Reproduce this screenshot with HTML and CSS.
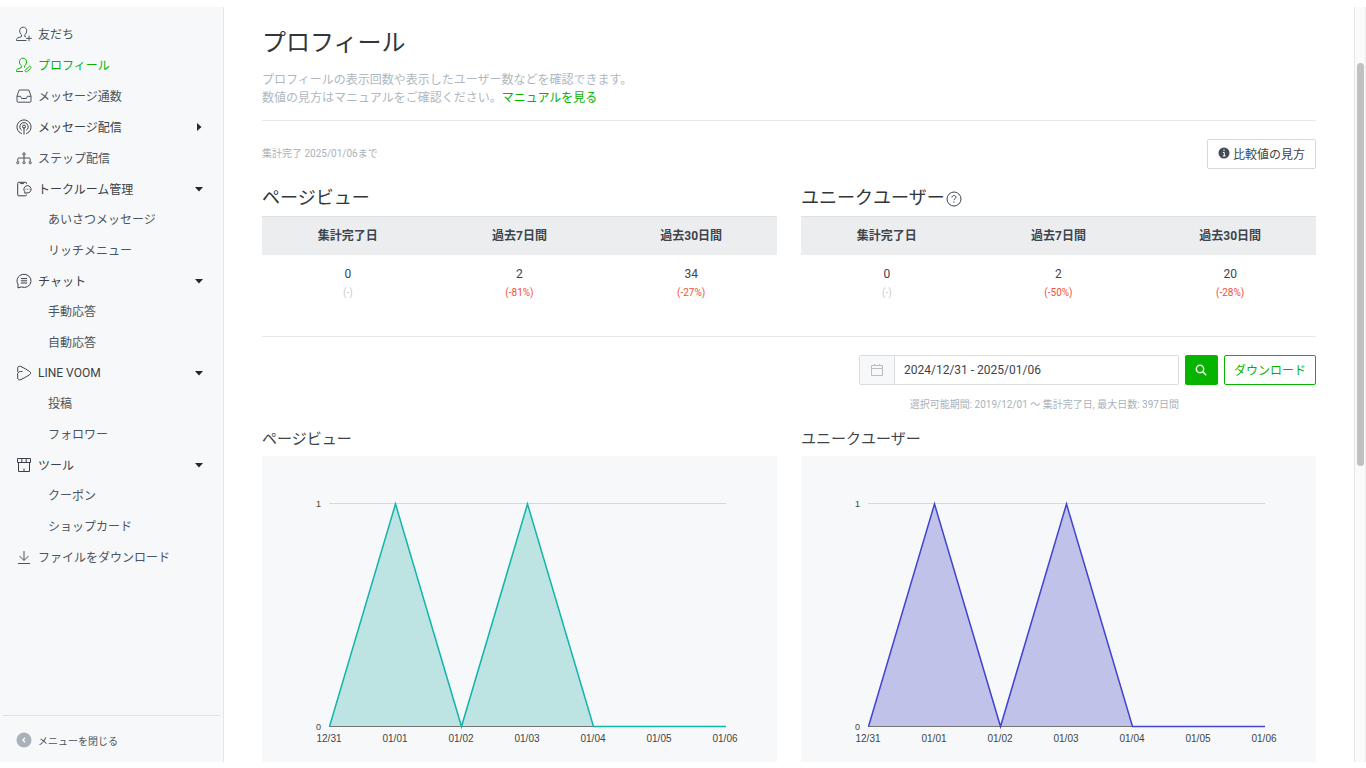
FILE: index.html
```html
<!DOCTYPE html>
<html lang="ja">
<head>
<meta charset="utf-8">
<title>プロフィール</title>
<link rel="stylesheet" href="styles.css">
</head>
<body>
<div class="app">
  <aside class="sidebar">
    <nav class="nav">
      <ul class="nav-list">
        <li><a class="nav-link" href="#"><svg class="icon" viewBox="0 0 16 16"><path d="M10 11l-1.200-.5V8.800C10 8 10.700 6.500 10.700 4.800 10.700 2.600 9.200 1.200 7.200 1.200S3.700 2.600 3.700 4.800c0 1.700.7 3.200 1.900 4v1.700L1.600 12c-.7.300-1.100.8-1.100 1.500v1h10M13 9.600v5.600M10.200 12.400h5.600"/></svg>友だち</a></li>
        <li><a class="nav-link active" href="#"><svg class="icon" viewBox="0 0 16 16"><path d="M9 10.500l-.4-.2V8.700C9.800 8 10.500 6.500 10.500 4.800 10.500 2.600 9 1.200 7 1.200S3.500 2.600 3.500 4.800c0 1.700.7 3.200 1.900 4v1.700L1.600 12c-.7.300-1.100.8-1.100 1.500v1h6.500M9.300 13.200l3.600-3.600c.5-.5 1.200-.5 1.700 0s.5 1.200 0 1.700l-3.400 3.200c-.5.500-1.300.5-1.800 0s-.5-.9-.1-1.300z"/></svg>プロフィール</a></li>
        <li><a class="nav-link" href="#"><svg class="icon" viewBox="0 0 16 16"><path d="M3.200 2h9.600l2.200 6v5.200a1 1 0 0 1-1 1H2a1 1 0 0 1-1-1V8zM1 8.300h3.600l1 2.200h4.800l1-2.200H15"/></svg>メッセージ通数</a></li>
        <li><a class="nav-link strong" href="#"><svg class="icon" viewBox="0 0 16 16"><path d="M5.800 14.600A7 7 0 1 1 10.200 14.600M5.800 11.400a4.200 4.200 0 1 1 4.400 0M8 8v7.500"/><circle cx="8" cy="7.600" r="1.500"/></svg>メッセージ配信<svg class="caret right" viewBox="0 0 8 8"><path d="M2 0l4.500 4L2 8z"/></svg></a></li>
        <li><a class="nav-link" href="#"><svg class="icon" viewBox="0 0 16 16"><path d="M8 5v6.500M1.800 11.700V9a1 1 0 0 1 1-1h10.400a1 1 0 0 1 1 1v2.700"/><circle cx="8" cy="4" r="1.200"/><circle cx="1.800" cy="12.700" r="1.100"/><circle cx="8" cy="12.700" r="1.100"/><circle cx="14.200" cy="12.700" r="1.100"/></svg>ステップ配信</a></li>
        <li>
          <a class="nav-link strong" href="#"><svg class="icon" viewBox="0 0 16 16"><path d="M10.500 3V2.300a1 1 0 0 0-1-1H2.700a1 1 0 0 0-1 1v11.500a1 1 0 0 0 1 1h6.800a1 1 0 0 0 1-1v-.3M4.200 1.500l.4 1.100h2.900l.4-1.100M8.800 12.200v-1.500a3.600 3.600 0 1 1 2.600 1.200zM9.600 8.200h.7M11.200 8.200h.7M12.800 8.200h.6"/></svg>トークルーム管理<svg class="caret" viewBox="0 0 8 8"><path d="M0 2h8L4 6.500z"/></svg></a>
          <ul class="sub">
            <li><a class="sub-link" href="#">あいさつメッセージ</a></li>
            <li><a class="sub-link" href="#">リッチメニュー</a></li>
          </ul>
        </li>
        <li>
          <a class="nav-link strong" href="#"><svg class="icon" viewBox="0 0 16 16"><path d="M2 15V11.200A7 6.600 0 1 1 5.200 13.900zM4.900 5.600h6.200M4.900 7.800h6.200M4.900 10h6.200"/></svg>チャット<svg class="caret" viewBox="0 0 8 8"><path d="M0 2h8L4 6.500z"/></svg></a>
          <ul class="sub">
            <li><a class="sub-link" href="#">手動応答</a></li>
            <li><a class="sub-link" href="#">自動応答</a></li>
          </ul>
        </li>
        <li>
          <a class="nav-link strong" href="#"><svg class="icon" viewBox="0 0 16 16"><path d="M1.700 6.800V3.200C1.700 1.400 3.200.7 4.900 1.500c2.900 1.300 5.800 3 8.700 5 1.400 1 1.400 2.200 0 3.200-2.900 2-5.800 3.600-8.700 4.900-1.700.8-3.200.1-3.200-1.700V8.500c0-1.400 2.300-2.200 4.800-2.100"/></svg>LINE VOOM<svg class="caret" viewBox="0 0 8 8"><path d="M0 2h8L4 6.500z"/></svg></a>
          <ul class="sub">
            <li><a class="sub-link" href="#">投稿</a></li>
            <li><a class="sub-link" href="#">フォロワー</a></li>
          </ul>
        </li>
        <li>
          <a class="nav-link strong" href="#"><svg class="icon" viewBox="0 0 16 16"><path d="M1.500 1.500h13v4h-13zM5.800 1.500v4M10.200 1.500v4M2.500 5.500v9h11v-9M8 14.500v-3"/></svg>ツール<svg class="caret" viewBox="0 0 8 8"><path d="M0 2h8L4 6.500z"/></svg></a>
          <ul class="sub">
            <li><a class="sub-link" href="#">クーポン</a></li>
            <li><a class="sub-link" href="#">ショップカード</a></li>
          </ul>
        </li>
        <li><a class="nav-link" href="#"><svg class="icon" viewBox="0 0 16 16"><path d="M8 2v9.300M3.500 7L8 11.500 12.500 7M2 14.500h12"/></svg>ファイルをダウンロード</a></li>
      </ul>
    </nav>
    <button class="collapse" type="button"><svg class="collapse-icon" viewBox="0 0 16 16"><circle cx="8" cy="8" r="7.500"/><path d="M9 5.800L6.900 8 9 10.200"/></svg>メニューを閉じる</button>
  </aside>

  <main class="main">
    <header class="page-head">
      <h1 class="title">プロフィール</h1>
      <p class="lead">プロフィールの表示回数や表示したユーザー数などを確認できます。<br>数値の見方はマニュアルをご確認ください。<a class="manual" href="#">マニュアルを見る</a></p>
    </header>

    <div class="status">
      <p class="note">集計完了 2025/01/06まで</p>
      <button class="btn guide" type="button"><svg class="info" viewBox="0 0 12 12"><circle cx="6" cy="6" r="5.500"/><path d="M6 2.500v1.600M4.900 5.500H6.300V9M4.700 9h2.800"/></svg>比較値の見方</button>
    </div>

    <div class="pair summary">
      <section>
        <h2 class="heading">ページビュー</h2>
        <table class="stats">
          <thead><tr><th scope="col">集計完了日</th><th scope="col">過去7日間</th><th scope="col">過去30日間</th></tr></thead>
          <tbody><tr>
            <td>0<span class="rate none">(-)</span></td>
            <td>2<span class="rate">(-81%)</span></td>
            <td>34<span class="rate">(-27%)</span></td>
          </tr></tbody>
        </table>
      </section>
      <section>
        <h2 class="heading">ユニークユーザー<svg class="help" viewBox="0 0 16 16"><circle cx="8" cy="8" r="7"/><path d="M6 6.500C6 5.200 6.900 4.500 8 4.500s2 .7 2 1.800C10 7.500 8 7.600 8 9.200M8 10.500v1.200"/></svg></h2>
        <table class="stats">
          <thead><tr><th scope="col">集計完了日</th><th scope="col">過去7日間</th><th scope="col">過去30日間</th></tr></thead>
          <tbody><tr>
            <td>0<span class="rate none">(-)</span></td>
            <td>2<span class="rate">(-50%)</span></td>
            <td>20<span class="rate">(-28%)</span></td>
          </tr></tbody>
        </table>
      </section>
    </div>

    <form class="filter">
      <div class="period">
        <div class="date-box">
          <label class="addon" for="period" aria-label="期間"><svg class="calendar" viewBox="0 0 12 12"><path d="M.5 1.500h11v10H.5zM.5 4.500h11M3.500 0v2M8.500 0v2"/></svg></label>
          <input class="date" id="period" type="text" value="2024/12/31 - 2025/01/06">
        </div>
        <p class="note hint">選択可能期間: 2019/12/01 〜 集計完了日, 最大日数: 397日間</p>
      </div>
      <button class="btn search" type="button" aria-label="検索"><svg class="glass" viewBox="0 0 12 12"><circle cx="5" cy="5" r="3.700"/><path d="M7.800 7.800L11.200 11.200"/></svg></button>
      <button class="btn download" type="button">ダウンロード</button>
    </form>

    <div class="pair charts">
      <section>
        <h3 class="chart-title">ページビュー</h3>
        <svg class="chart views" viewBox="0 0 515 306">
          <path class="grid-line" d="M67 47.500H464"/>
          <path class="base-line" d="M67 270.500H464"/>
          <path class="area" d="M67.500 270.500L133.500 48L199.500 270.500L265.500 48L331.500 270.500Z"/>
          <path class="base-line" d="M67.500 270.500H331.500"/>
          <path class="line" d="M67.500 270.500L133.500 48L199.500 270.500L265.500 48L331.500 270.500H464"/>
          <g class="y-labels"><text x="59" y="51">1</text><text x="59" y="274">0</text></g>
          <g class="x-labels"><text x="67" y="286">12/31</text><text x="133" y="286">01/01</text><text x="199" y="286">01/02</text><text x="265" y="286">01/03</text><text x="331" y="286">01/04</text><text x="397" y="286">01/05</text><text x="463" y="286">01/06</text></g>
        </svg>
      </section>
      <section>
        <h3 class="chart-title">ユニークユーザー</h3>
        <svg class="chart users" viewBox="0 0 515 306">
          <path class="grid-line" d="M67 47.500H464"/>
          <path class="base-line" d="M67 270.500H464"/>
          <path class="area" d="M67.500 270.500L133.500 48L199.500 270.500L265.500 48L331.500 270.500Z"/>
          <path class="base-line" d="M67.500 270.500H331.500"/>
          <path class="line" d="M67.500 270.500L133.500 48L199.500 270.500L265.500 48L331.500 270.500H464"/>
          <g class="y-labels"><text x="59" y="51">1</text><text x="59" y="274">0</text></g>
          <g class="x-labels"><text x="67" y="286">12/31</text><text x="133" y="286">01/01</text><text x="199" y="286">01/02</text><text x="265" y="286">01/03</text><text x="331" y="286">01/04</text><text x="397" y="286">01/05</text><text x="463" y="286">01/06</text></g>
        </svg>
      </section>
    </div>
  </main>

  <div class="scroll-track"><div class="scroll-thumb"></div></div>
</div>
</body>
</html>
```
FILE: styles.css
```css
* {
  box-sizing: border-box;
}

body {
  margin: 0;
  background: #fff;
  color: #3c444c;
  font-family: Roboto, "Noto Sans CJK JP", sans-serif;
  font-size: 12px;
}

h1, h2, h3, p, ul {
  margin: 0;
  padding: 0;
  font-weight: 400;
}

ul {
  list-style: none;
}

a {
  color: inherit;
  text-decoration: none;
}

button, input {
  margin: 0;
  font: inherit;
  color: inherit;
}

.app {
  display: grid;
  grid-template-columns: 224px 1fr 12px;
  min-height: 100vh;
  padding: 7px 0 6px;
}

/* Sidebar */
.sidebar {
  display: flex;
  flex-direction: column;
  background: #f7f8fa;
  border-right: 1px solid #e4e7ea;
}

.nav {
  flex: 1;
  padding-top: 11px;
}

.nav-link {
  display: flex;
  align-items: center;
  gap: 6px;
  height: 31px;
  padding: 0 20px 0 16px;
  color: #4c545c;
}

.nav-link.strong {
  color: #3a4046;
}

.nav-link.active {
  color: #06b400;
}

.icon {
  width: 16px;
  height: 16px;
  fill: none;
  stroke: currentColor;
  stroke-width: 1;
  stroke-linejoin: round;
}

.caret {
  width: 8px;
  height: 8px;
  margin-left: auto;
  fill: #22272b;
}

.sub {
  margin-top: -1px;
}

.sub-link {
  display: flex;
  align-items: center;
  height: 31px;
  padding-left: 48px;
  color: #4c545c;
}

.collapse {
  display: flex;
  align-items: center;
  gap: 6px;
  height: 47px;
  margin: 0 3px;
  padding: 2px 0 0 13px;
  border: 0;
  border-top: 1px solid #dfe3e6;
  background: none;
  color: #4c545c;
  font-size: 10px;
}

.collapse-icon {
  width: 16px;
  height: 16px;
  fill: #a9b1ba;
}

.collapse-icon path {
  fill: none;
  stroke: #fff;
  stroke-width: 1.3;
}

/* Main column */
.main {
  padding: 18px 38px 0;
}

.page-head {
  padding-bottom: 13px;
  border-bottom: 1px solid #e6e8ea;
}

.title {
  font-size: 24px;
  line-height: 36px;
  color: #30363c;
}

.lead {
  margin-top: 10px;
  line-height: 18px;
  color: #b0b8c0;
}

.manual {
  color: #06b400;
}

.status {
  display: flex;
  align-items: center;
  justify-content: space-between;
  padding-top: 18px;
}

.note {
  font-size: 10px;
  line-height: 20px;
  color: #a9b1ba;
}

.btn {
  display: flex;
  align-items: center;
  justify-content: center;
  height: 30px;
  border: 1px solid #d5dade;
  border-radius: 2px;
  background: #fff;
}

.guide {
  gap: 3px;
  padding: 0 10px 2px;
}

.info {
  width: 12px;
  height: 12px;
  fill: #434a52;
}

.info path {
  fill: none;
  stroke: #fff;
  stroke-width: 1;
}

.pair {
  display: grid;
  grid-template-columns: 1fr 1fr;
  gap: 24px;
}

.summary {
  padding: 15px 0 33px;
  border-bottom: 1px solid #e6e8ea;
}

.heading {
  display: flex;
  align-items: center;
  gap: 1px;
  margin-bottom: 4px;
  font-size: 18px;
  line-height: 28px;
  color: #30363c;
}

.help {
  width: 16px;
  height: 16px;
  margin-top: 2px;
  fill: none;
  stroke: #3c444c;
  stroke-width: 1;
}

.stats {
  width: 100%;
  table-layout: fixed;
  border-collapse: collapse;
  text-align: center;
}

.stats th {
  height: 38px;
  padding: 0 0 2px;
  background: #ebedef;
  border-top: 1px solid #dde1e5;
  font-weight: 700;
}

.stats td {
  padding: 10px 0 0;
  line-height: 18px;
}

.rate {
  display: block;
  font-size: 10px;
  line-height: 20px;
  color: #f0503c;
}

.rate.none {
  color: #c9ced4;
}

/* Date filter */
.filter {
  display: flex;
  justify-content: flex-end;
  gap: 6px;
  padding-top: 18px;
}

.period {
  width: 320px;
}

.date-box {
  display: flex;
  height: 30px;
  border: 1px solid #d9dde1;
  border-radius: 2px;
}

.addon {
  display: flex;
  align-items: center;
  justify-content: center;
  width: 35px;
  background: #f7f8fa;
  border-right: 1px solid #d9dde1;
}

.calendar {
  width: 12px;
  height: 12px;
  fill: none;
  stroke: #b7bdc4;
  stroke-width: 1;
}

.date {
  flex: 1;
  min-width: 0;
  padding: 0 9px;
  border: 0;
  background: #fff;
}

.hint {
  margin-top: 10px;
  text-align: right;
}

.search {
  width: 33px;
  padding: 0;
  border-color: #06b400;
  background: #06b400;
}

.glass {
  width: 12px;
  height: 12px;
  fill: none;
  stroke: #fff;
  stroke-width: 1.4;
}

.download {
  padding: 0 9px;
  border-color: #06b400;
  color: #06b400;
}

/* Charts */
.charts {
  padding-top: 12px;
}

.chart-title {
  margin-bottom: 5px;
  font-size: 15px;
  line-height: 24px;
}

.chart {
  display: block;
  width: 100%;
  background: #f7f8fa;
  font-family: "Liberation Sans", Arial, sans-serif;
  font-size: 10px;
}

.chart text {
  fill: #444;
}

.x-labels {
  text-anchor: middle;
}

.y-labels {
  font-size: 9px;
  text-anchor: end;
}

.grid-line {
  stroke: #d6d8da;
}

.base-line {
  stroke: #757575;
}

.line {
  fill: none;
  stroke-width: 1.5;
}

.views .area {
  fill: #bde4e2;
}

.views .line {
  stroke: #12b5ab;
}

.users .area {
  fill: #c1c2ea;
}

.users .line {
  stroke: #4044d0;
}

/* Scroll indicator */
.scroll-track {
  display: grid;
  grid-template-rows: 56fr 403fr 296fr;
  padding: 0 1px 0 2px;
  background: #fafafa;
  border-left: 1px solid #e6e6e6;
  border-right: 1px solid #ececec;
}

.scroll-thumb {
  grid-row: 2;
  border-radius: 4px;
  background: #c1c1c1;
}
```
